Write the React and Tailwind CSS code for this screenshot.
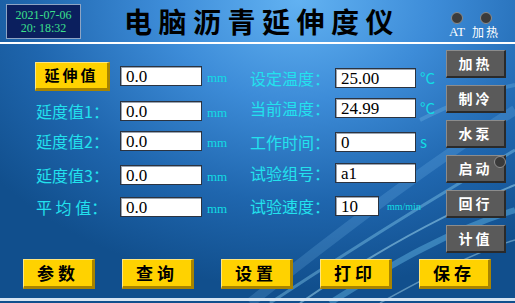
import React from 'react'

const leftRows = [
  { label: '延度值1：', value: '0.0', mt: 'mt-[15px]' },
  { label: '延度值2：', value: '0.0', mt: 'mt-[10px]' },
  { label: '延度值3：', value: '0.0', mt: 'mt-[14px]' },
  { label: '平 均 值：', value: '0.0', mt: 'mt-[12px]' },
]

const rightRows = [
  { label: '设定温度：', value: '25.00', unit: '°C', mt: 'mt-[24px]', w: 'w-[81px]' },
  { label: '当前温度：', value: '24.99', unit: '°C', mt: 'mt-[10px]', w: 'w-[81px]' },
  { label: '工作时间：', value: '0', unit: 's', mt: 'mt-[14px]', w: 'w-[81px]' },
  { label: '试验组号：', value: 'a1', unit: '', mt: 'mt-[11px]', w: 'w-[81px]' },
  { label: '试验速度：', value: '10', unit: 'mm/min', mt: 'mt-[13px]', w: 'w-[44px]' },
]

const sideButtons = ['加热', '制冷', '水泵', '启动', '回行', '计值']
const bottomButtons = ['参数', '查询', '设置', '打印', '保存']

const cjk = "font-['Noto_Sans_CJK_SC',sans-serif]"
const serif = "font-['Liberation_Serif',serif]"

function Field({ value, w = 'w-[82px]' }) {
  return (
    <div className={`${w} h-[20px] shrink-0 bg-white border border-[#2b3340] shadow-[inset_1px_1px_0_#9aa4b0] flex items-center pl-[5px] ${serif} text-[17px] leading-none text-black`}>
      {value}
    </div>
  )
}

function YellowButton({ children, className = '' }) {
  return (
    <div className={`bg-[#ffd200] border-t border-l border-t-[#ffe680] border-l-[#ffe680] border-b-[3px] border-r-[3px] border-b-[#a88400] border-r-[#a88400] flex items-center justify-center ${cjk} font-bold text-black tracking-[3px] ${className}`}>
      {children}
    </div>
  )
}

function Lamp() {
  return <span className="w-[12px] h-[12px] rounded-full bg-[#3b3b3b] border border-[#8a8a8a]" />
}

export default function App() {
  return (
    <div className={`relative w-[515px] h-[303px] overflow-hidden bg-[radial-gradient(ellipse_75%_95%_at_58%_0%,#62b2f2_0%,#3d8cd8_35%,#1f66ae_70%,#114f8d_100%)] ${cjk}`}>
      {/* swirl decoration */}
      <svg className="absolute inset-0 pointer-events-none" width="515" height="303" viewBox="0 0 515 303">
        <path d="M270 303 C 350 250, 430 200, 515 150" stroke="#9fe6ff" strokeOpacity="0.35" strokeWidth="3" fill="none" />
        <path d="M300 303 C 370 255, 440 215, 515 185" stroke="#b8f0ff" strokeOpacity="0.45" strokeWidth="2" fill="none" />
        <path d="M330 303 C 390 265, 450 230, 515 210" stroke="#7fd8ff" strokeOpacity="0.35" strokeWidth="6" fill="none" />
        <path d="M250 303 C 330 240, 420 170, 515 110" stroke="#8fd4ff" strokeOpacity="0.18" strokeWidth="10" fill="none" />
        <path d="M380 303 C 430 275, 480 250, 515 240" stroke="#c8f4ff" strokeOpacity="0.4" strokeWidth="1.5" fill="none" />
        <path d="M420 120 C 460 100, 490 90, 515 85" stroke="#9fe6ff" strokeOpacity="0.2" strokeWidth="4" fill="none" />
      </svg>

      <div className="relative flex flex-col h-full">
        {/* header */}
        <div className="h-[42px] flex items-start">
          <div className={`ml-[6px] mt-[4px] w-[75px] h-[35px] bg-[#0b1f5e] border border-[#8ea4c4] flex flex-col items-center justify-center ${serif} text-[12px] leading-[13px] text-[#3ce08c]`}>
            <span>2021-07-06</span>
            <span>20: 18:32</span>
          </div>
          <div className="ml-[43px] mt-[5px] text-[28px] leading-[32px] font-bold tracking-[6.5px] text-black">
            电脑沥青延伸度仪
          </div>
          <div className="ml-auto mr-[15px] mt-[12px] flex gap-[7px]">
            <div className="w-[16px] flex flex-col items-center gap-[1px]">
              <Lamp />
              <span className={`${serif} text-[13px] leading-[13px] text-white`}>AT</span>
            </div>
            <div className="w-[28px] flex flex-col items-center gap-[1px]">
              <Lamp />
              <span className="text-[12px] leading-[13px] tracking-[2px] text-white">加热</span>
            </div>
          </div>
        </div>
        <div className="h-[2px] bg-white" />

        {/* body */}
        <div className="h-[215px] flex">
          {/* left column */}
          <div className="w-[250px] pl-[35px] flex flex-col">
            <div className="mt-[22px] h-[20px] flex items-center">
              <div className="w-[85px] shrink-0 flex items-center">
                <YellowButton className="w-[75px] h-[29px] text-[15px]">延伸值</YellowButton>
              </div>
              <Field value="0.0" />
              <span className={`ml-[5px] mt-[3px] ${serif} text-[13px] text-[#12dce4]`}>mm</span>
            </div>
            {leftRows.map((r) => (
              <div key={r.label} className={`${r.mt} h-[20px] flex items-center`}>
                <span className="w-[85px] shrink-0 pl-[1px] text-[16px] leading-none text-[#22e2ee] whitespace-pre">{r.label}</span>
                <Field value={r.value} />
                <span className={`ml-[5px] mt-[3px] ${serif} text-[13px] text-[#12dce4]`}>mm</span>
              </div>
            ))}
          </div>

          {/* middle column */}
          <div className="w-[196px] flex flex-col">
            {rightRows.map((r) => (
              <div key={r.label} className={`${r.mt} h-[20px] flex items-center`}>
                <span className="w-[85px] shrink-0 text-[16px] leading-none text-[#22e2ee]">{r.label}</span>
                <Field value={r.value} w={r.w} />
                {r.unit === 'mm/min' ? (
                  <span className={`ml-[8px] ${serif} text-[10px] text-[#12dce4]`}>{r.unit}</span>
                ) : (
                  <span className="ml-[4px] text-[15px] text-[#12dce4]">{r.unit}</span>
                )}
              </div>
            ))}
          </div>

          {/* side buttons */}
          <div className="w-[60px] pt-[6px] flex flex-col gap-[7px]">
            {sideButtons.map((b) => (
              <div key={b} className="relative h-[28px] bg-[#5a5a5a] border-t border-l border-t-[#8c8c8c] border-l-[#8c8c8c] border-b-2 border-r-2 border-b-[#2a2a2a] border-r-[#2a2a2a] flex items-center justify-center text-[14px] font-bold tracking-[3px] text-white">
                {b}
                {b === '启动' && (
                  <span className="absolute -right-[2px] top-0 w-[12px] h-[12px] rounded-full bg-[#3a3a3a] border border-[#909090]" />
                )}
              </div>
            ))}
          </div>
        </div>

        {/* bottom buttons */}
        <div className="h-[30px] pl-[23px] flex gap-[27px]">
          {bottomButtons.map((b) => (
            <YellowButton key={b} className="w-[72px] h-[30px] text-[17px] tracking-[4px]">{b}</YellowButton>
          ))}
        </div>
        <div className="h-[9px]" />
        <div className="h-[3px] bg-[#d6e4f2]" />
      </div>
    </div>
  )
}
